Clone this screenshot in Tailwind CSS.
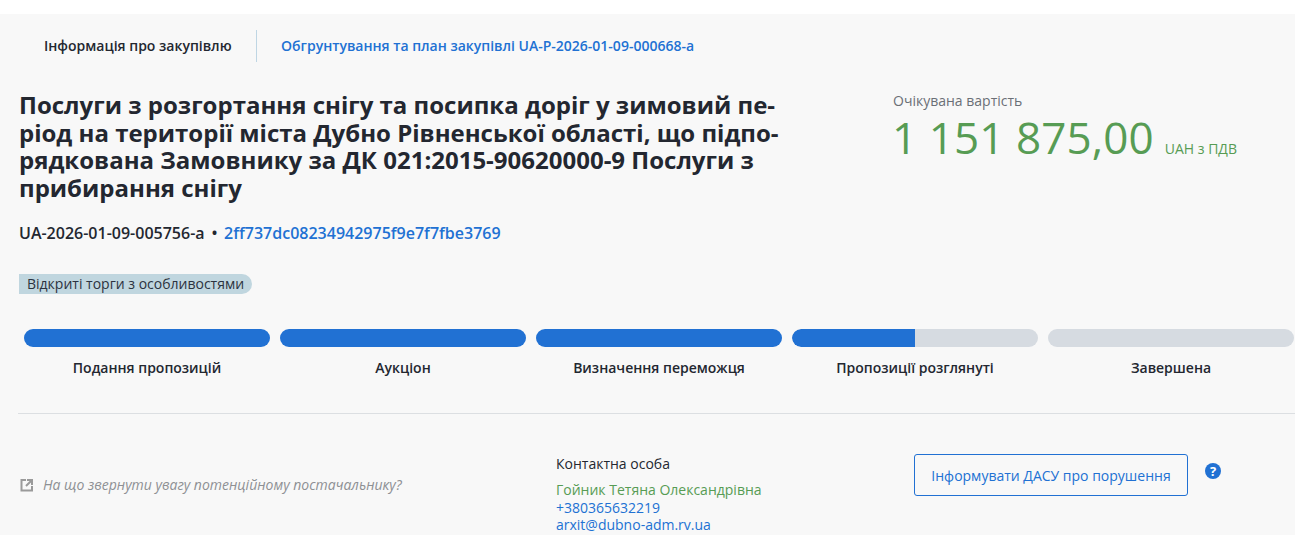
<!DOCTYPE html>
<html lang="uk">

<head>
    <meta charset="UTF-8" />
    <meta name="viewport" content="width=device-width, initial-scale=1.0" />
    <title>Інформація про закупівлю</title>
    <script src="https://cdn.jsdelivr.net/npm/@tailwindcss/browser@4"></script>
</head>

<body class="bg-white font-['Open_Sans',sans-serif] text-[#232730] h-[535px] overflow-hidden">
    <div class="mt-[14px] h-[521px] bg-[#f8f8f8] overflow-hidden">

        <!-- tabs -->
        <div class="flex items-center pt-[16px] h-[48px]">
            <span class="ml-[44px] text-[14px] font-semibold leading-[32px]">Інформація про закупівлю</span>
            <div class="ml-[25px] w-px h-[32px] bg-[#bfd6e4] -translate-x-px"></div>
            <a class="ml-[23.5px] text-[14px] font-semibold leading-[32px] text-[#2171d3]">Обгрунтування та план закупівлі UA-P-2026-01-09-000668-a</a>
        </div>

        <!-- title + price -->
        <div class="flex pl-[19px] mt-[29px]">
            <div class="w-[874px]">
                <h1 class="text-[24px] font-bold leading-[27.6px]">Послуги з розгортання снігу та посипка доріг у зимовий пе-<br />ріод на території міста Дубно Рівненської області, що підпо-<br />рядкована Замовнику за ДК 021:2015-90620000-9 Послуги з<br />прибирання снігу</h1>
                <div class="mt-[20px] text-[16px] leading-[24px] font-semibold flex items-center">
                    <span>UA-2026-01-09-005756-a</span>
                    <span class="ml-[7px] mr-[6.5px]">•</span>
                    <a class="text-[#2171d3]">2ff737dc08234942975f9e7f7fbe3769</a>
                </div>
            </div>
            <div>
                <div class="text-[14px] leading-[20px] text-[#6b6f76]">Очікувана вартість</div>
                <div class="flex items-baseline text-[#579c54] mt-[-2px]">
                    <span class="text-[44px] leading-[56px] ml-[-1px] tracking-[0.09px]">1 151 875,00</span>
                    <span class="ml-[11px] text-[14px]">UAH з ПДВ</span>
                </div>
            </div>
        </div>

        <!-- procedure type -->
        <div class="pl-[19px] mt-[26px]">
            <span class="inline-block h-[20px] px-[8px] bg-[#c0d6df] rounded-r-full rounded-l-[4px] text-[14px] leading-[20px] text-[#2c3340]">Відкриті торги з особливостями</span>
        </div>

        <!-- status bars -->
        <div class="grid grid-cols-5 gap-[10px] pl-[24px] pr-px mt-[34px]">
            <div>
                <div class="h-[18px] rounded-full bg-[#2171d3]"></div>
                <div class="mt-[11px] text-center text-[14px] leading-[20px] font-semibold">Подання пропозицій</div>
            </div>
            <div>
                <div class="h-[18px] rounded-full bg-[#2171d3]"></div>
                <div class="mt-[11px] text-center text-[14px] leading-[20px] font-semibold">Аукціон</div>
            </div>
            <div>
                <div class="h-[18px] rounded-full bg-[#2171d3]"></div>
                <div class="mt-[11px] text-center text-[14px] leading-[20px] font-semibold">Визначення переможця</div>
            </div>
            <div>
                <div class="h-[18px] rounded-full bg-[#d6dbe1] overflow-hidden">
                    <div class="h-full w-1/2 rounded-l-full bg-[#2171d3]"></div>
                </div>
                <div class="mt-[11px] text-center text-[14px] leading-[20px] font-semibold">Пропозиції розглянуті</div>
            </div>
            <div>
                <div class="h-[18px] rounded-full bg-[#d6dbe1]"></div>
                <div class="mt-[11px] text-center text-[14px] leading-[20px] font-semibold">Завершена</div>
            </div>
        </div>

        <div class="ml-[18px] mt-[35px] h-px bg-[#dcdfe2]"></div>

        <!-- bottom row -->
        <div class="flex mt-[40px]">
            <a class="w-[556px] pl-[20px] pt-[21px] flex items-start text-[14px] leading-[20px] italic text-[#8e9094]">
                <svg class="w-[14px] h-[14px] mt-[3px] mr-[9px] shrink-0" viewBox="0 0 14 14" fill="none" stroke="#9a9a9a" stroke-width="2">
                    <path d="M6 2H1.5v10.5H12V8" />
                    <path d="M7 1h6v6h-2V4.4L6.7 8.7 5.3 7.3 9.6 3H7z" fill="#9a9a9a" stroke="none" />
                </svg>
                <span>На що звернути увагу потенційному постачальнику?</span>
            </a>
            <div class="w-[358px] text-[14px] leading-[17.5px]">
                <div class="leading-[20px] mb-[7px]">Контактна особа</div>
                <div class="text-[#579c54]">Гойник Тетяна Олександрівна</div>
                <div class="text-[#2171d3]">+380365632219</div>
                <div class="text-[#2171d3]">arxit@dubno-adm.rv.ua</div>
            </div>
            <button class="w-[274px] h-[42px] border border-[#2171d3] rounded-[3px] text-[14px] font-normal text-[#2171d3]">Інформувати ДАСУ про порушення</button>
            <span class="ml-[17px] mt-[9px] w-[16px] h-[16px] rounded-full bg-[#2171d3] text-white text-[13px] leading-[16px] font-bold text-center">?</span>
        </div>
    </div>
</body>

</html>
